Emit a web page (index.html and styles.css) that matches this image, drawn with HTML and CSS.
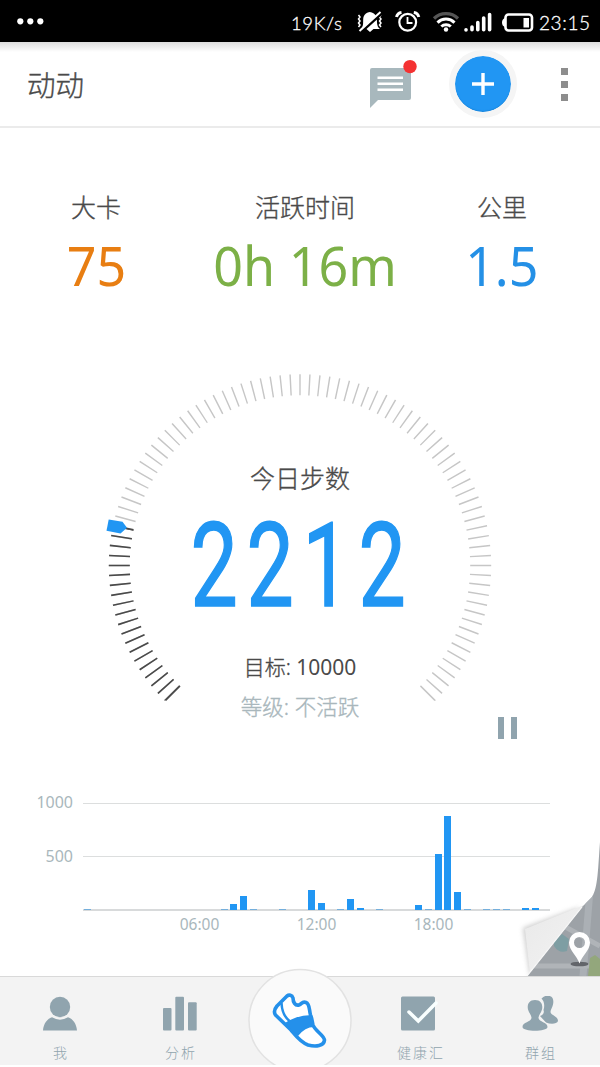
FILE: index.html
```html
<!DOCTYPE html>
<html lang="zh-CN">

<head>
    <meta charset="UTF-8">
    <meta name="viewport" content="width=device-width, initial-scale=1.0">
    <title>动动</title>
    <link rel="stylesheet" href="styles.css">
</head>

<body>
    <div class="status-bar">
        <svg class="more" width="30" height="42" viewBox="0 0 30 42">
            <g fill="#fff">
                <circle cx="3.3" cy="21.3" r="3.1" />
                <circle cx="13.3" cy="21.3" r="3.1" />
                <circle cx="23.3" cy="21.3" r="3.1" />
            </g>
        </svg>
        <span class="speed">19K/s</span>
        <!-- mute, alarm, wifi, signal, battery -->
        <svg class="status-icons" width="184" height="42" viewBox="352 0 184 42">
            <g fill="none" stroke="#fff" stroke-width="1.5">
                <path d="M358.500 15l1.500 2-1.500 2 1.500 2-1.500 2 1.500 2-1.500 2M381 15l-1.500 2 1.500 2-1.500 2 1.500 2-1.500 2 1.500 2" />
            </g>
            <path d="M360.500 29C364.500 26 362.500 21 363.500 17C364.500 14 367 12.500 369.800 12C372.500 12.500 375.500 14 376.500 17C377.500 21 376 26 380 29H373.500L370 32L366.500 29Z" fill="#fff" />
            <path d="M360.500 32.500L381.500 13.500" stroke="#000" stroke-width="3" />
            <path d="M359.500 31L380.500 12" stroke="#fff" stroke-width="2" />
            <g fill="none" stroke="#fff">
                <circle cx="407.700" cy="22.300" r="8.400" stroke-width="2.200" />
                <path d="M407.500 17v6h5" stroke-width="1.800" />
                <path d="M396.500 17q1-4 5-4.500M413.800 12.500q4 .5 5 4.500" stroke-width="3" />
                <path d="M434 18.500a17 17 0 0 1 24 0" stroke="#555" stroke-width="3.200" />
                <path d="M437.500 22.600a12 12 0 0 1 17 0" stroke-width="3" />
                <path d="M441.300 26.500a7 7 0 0 1 9.500 0" stroke-width="3" />
            </g>
            <circle cx="446" cy="29.500" r="2.200" fill="#fff" />
            <g stroke="#fff" stroke-width="3.600" stroke-linecap="round">
                <path d="M466 29.800v.1M472 27v2.800M477.800 22.500v7.300M483.700 18v11.800M489.600 14.500v15.300" />
            </g>
            <rect x="505.500" y="14.500" width="26.500" height="16" rx="3" fill="none" stroke="#fff" stroke-width="2.600" />
            <path d="M505 18q-3 1-3 4.500t3 4.500z" fill="#fff" />
            <rect x="523.500" y="18" width="5.500" height="9.500" fill="#fff" />
        </svg>
        <span class="clock">23:15</span>
    </div>

    <header class="header">
        <h1>动动</h1>
        <svg class="message" width="52" height="52" viewBox="368 58 52 52">
            <path d="M370 70q0-2 2-2h37q2 0 2 2v28q0 2-2 2h-31l-8 8z" fill="#a8b8bd" />
            <path d="M377.500 77.700h25.500M377.500 83.700h25.500M377.500 89.700h25.500" stroke="#fff" stroke-width="2.500" />
            <circle cx="410" cy="66.600" r="6.700" fill="#f43232" />
        </svg>
        <div class="add">
            <svg width="22" height="22" viewBox="0 0 22 22">
                <path d="M0 11h22M11 0v22" stroke="#fff" stroke-width="3.400" />
            </svg>
        </div>
        <div class="menu">
            <i></i>
            <i></i>
            <i></i>
        </div>
    </header>

    <main class="main">
        <section class="stats">
            <div class="stat calories">
                <h2>大卡</h2>
                <p><span>75</span></p>
            </div>
            <div class="stat active-time">
                <h2>活跃时间</h2>
                <p><span>0h 16m</span></p>
            </div>
            <div class="stat distance">
                <h2>公里</h2>
                <p><span>1.5</span></p>
            </div>
        </section>

        <section class="gauge">
            <!-- 3 degrees per tick, 270 degrees in total -->
            <svg class="dial" width="400" height="350" viewBox="100 366 400 350">
                <circle class="ticks" cx="300" cy="565.500" r="180.700" pathLength="120" stroke-dasharray=".15 .85" stroke-dashoffset=".075" />
                <path d="M300 565.500L165 700.500v20h270v-20z" fill="#fff" />
                <path class="ticks done" d="M172.227 693.273A180.700 180.700 0 0 1 123.250 527.930" pathLength="19" stroke-dasharray=".17 .83" stroke-dashoffset=".085" />
                <g class="end-ticks">
                    <path d="M165.500 700.500L180 686" stroke="#4a4a4a" />
                    <path d="M435 700.500L420.500 686" stroke="#c6c6c6" />
                    <path d="M133.500 529.700L124 527.800" stroke="#4a4a4a" />
                </g>
                <path d="M108.700 519.500L122.500 521.700L127 527.800L120.500 533.500L106.500 530.700Z" fill="#2196f3" />
            </svg>
            <div class="gauge-text">
                <h2>今日步数</h2>
                <p class="steps">2212</p>
                <p class="goal">目标: <span>10000</span></p>
                <p class="level">等级: 不活跃</p>
            </div>
        </section>

        <div class="pause">
            <i></i>
            <i></i>
        </div>

        <section class="chart">
            <div class="y-axis">
                <span>1000</span>
                <span>500</span>
            </div>
            <div class="plot">
                <div class="bars">
                    <i class="low" style="grid-column: 1"></i>
                    <i class="low" style="grid-column: 15"></i>
                    <i style="grid-column: 16; height: 6px"></i>
                    <i style="grid-column: 17; height: 14px"></i>
                    <i class="low" style="grid-column: 18"></i>
                    <i class="low" style="grid-column: 21"></i>
                    <i style="grid-column: 24; height: 20px"></i>
                    <i style="grid-column: 25; height: 7px"></i>
                    <i class="low" style="grid-column: 27"></i>
                    <i style="grid-column: 28; height: 11px"></i>
                    <i style="grid-column: 29; height: 2px"></i>
                    <i class="low" style="grid-column: 31"></i>
                    <i style="grid-column: 35; height: 5px"></i>
                    <i class="low" style="grid-column: 36"></i>
                    <i style="grid-column: 37; height: 56px"></i>
                    <i style="grid-column: 38; height: 94px"></i>
                    <i style="grid-column: 39; height: 18px"></i>
                    <i class="low" style="grid-column: 40"></i>
                    <i class="low" style="grid-column: 42"></i>
                    <i class="low" style="grid-column: 43"></i>
                    <i class="low" style="grid-column: 44"></i>
                    <i style="grid-column: 46; height: 2px"></i>
                    <i style="grid-column: 47; height: 2px"></i>
                </div>
                <div class="x-axis">
                    <span>06:00</span>
                    <span>12:00</span>
                    <span>18:00</span>
                </div>
            </div>
        </section>

        <!-- page corner folded over the map -->
        <svg class="map-corner" width="90" height="136" viewBox="510 840 90 136">
            <defs>
                <clipPath id="map">
                    <path d="M600 842C598 868 598 888 592 897L582 907L527 976H600Z" />
                </clipPath>
                <linearGradient id="fold" x1="0" y1="0" x2="1" y2="1">
                    <stop offset="0" stop-color="#e9e9e9" />
                    <stop offset="1" stop-color="#f3f3f3" />
                </linearGradient>
                <filter id="shadow" x="-20%" y="-20%" width="140%" height="140%">
                    <feGaussianBlur stdDeviation="2.500" />
                </filter>
            </defs>
            <path d="M580 907L523 928L530 976Z" fill="#999" opacity=".5" filter="url(#shadow)" />
            <path d="M584 905L525 929L530 974Z" fill="url(#fold)" />
            <g clip-path="url(#map)">
                <rect x="510" y="840" width="90" height="136" fill="#9da2a7" />
                <path d="M594 840L583 976" stroke="#abb0b5" stroke-width="7" />
                <path d="M560 924L600 946M525 966H600" stroke="#b0b4b8" stroke-width="5" />
                <path d="M554 942L562 934L569 939L567 951Q559 954 554 946Z" fill="#7e9ea3" />
                <path d="M588 976L590 958L595 955L600 959V976Z" fill="#93a77c" />
            </g>
            <path d="M582 907L527 976" fill="none" stroke="#fafafa" stroke-width="1.200" />
            <ellipse cx="579.500" cy="964" rx="9" ry="2.300" fill="#62656a" />
            <path fill-rule="evenodd" d="M579.500 963.500C577 956 569 950 569 942.500A10.500 10.500 0 0 1 590 942.500C590 950 582 956 579.500 963.500ZM579.500 948a5.500 5.500 0 1 0 0-11a5.500 5.500 0 0 0 0 11Z" fill="#fff" />
        </svg>
    </main>

    <nav class="tabs">
        <a class="tab">
            <svg width="36" height="36" viewBox="0 0 36 36">
                <circle cx="18" cy="11" r="10.200" />
                <path d="M1 34.500C1.500 28 5 23 10 21.300Q18 26 26 21.300C31 23 34.500 28 35 34.500Z" />
            </svg>
            <span>我</span>
        </a>
        <a class="tab">
            <svg width="36" height="36" viewBox="0 0 36 36">
                <rect x="1" y="12" width="8.500" height="22.500" rx="1" />
                <rect x="13.300" y=".700" width="8.700" height="33.800" rx="1" />
                <rect x="26" y="6.300" width="8.700" height="28.200" rx="1" />
            </svg>
            <span>分析</span>
        </a>
        <a class="tab home">
            <svg width="104" height="97" viewBox="248 968 104 97">
                <circle cx="300" cy="1020.500" r="51" fill="#fafafa" stroke="#e2e2e2" stroke-width="1.500" />
                <path d="M287 996C289 994.500 292 995 293 998C293 1002 295 1006 299 1005C302 1004 302 1001 306 1002.500C310 1004 309 1010 310.500 1015C312 1018 312 1021 313 1025C315 1031 324 1035 324.500 1040C324 1046 316 1047 308 1045C300 1042 296 1036 291 1030L275.500 1015C273.500 1012 274.500 1009 277 1006Z" fill="#fff" stroke="#2490ea" stroke-width="3.600" stroke-linejoin="round" />
                <path d="M281.500 1003Q282 1015 289.500 1021" fill="none" stroke="#2490ea" stroke-width="2.500" />
                <path d="M285 1023Q297 1015 312 1015L314 1027Q305 1027 298 1036Z" fill="#2490ea" />
            </svg>
        </a>
        <a class="tab">
            <svg width="40" height="36" viewBox="0 0 40 36">
                <rect x="1" y=".500" width="34" height="34" rx="1.500" />
                <path d="M9 16L18.300 25L36 7" fill="none" stroke="#f9ffff" stroke-width="3.500" stroke-linecap="round" />
            </svg>
            <span>健康汇</span>
        </a>
        <a class="tab">
            <svg width="36" height="36" viewBox="0 0 36 36">
                <path d="M25.500-.300C31-.300 32 4 31 8.500C30.500 11 28.500 14 28.500 16C29 19.500 36 20 36 25C35 28 29 28.500 24 26.500L18 20Q23 18 21.500 14C23 9 22 5 19.500 2.500Q22-.300 25.500-.300Z" />
                <path d="M13 4C19.500 4 21 9 20 13.500C19 17 16.500 19 16.500 22C17 26 25.500 26 25.500 31C25 36 1 36 .500 31C.500 26 9 26 9.500 22C9.500 19 7 17 6 13.500C5 9 6.500 4 13 4Z" stroke="#f3f3f3" stroke-width="1.800" paint-order="stroke" />
            </svg>
            <span>群组</span>
        </a>
    </nav>
</body>

</html>
```
FILE: styles.css
```css
* {
    box-sizing: border-box;
}

body {
    margin: 0;
    width: 600px;
    height: 1067px;
    overflow: hidden;
    display: flex;
    flex-direction: column;
    background-color: #fff;
    color: #4a4a4a;
    font-family: "Noto Sans", "Noto Sans CJK SC", sans-serif;
}

h1,
h2,
p {
    margin: 0;
    font-weight: 300;
}

h1,
h2,
.goal,
.level {
    -webkit-text-stroke: 0.35px;
}

svg {
    display: block;
    flex: none;
}

/* Status bar */
.status-bar {
    height: 42px;
    flex: none;
    display: flex;
    align-items: center;
    padding-left: 17px;
    background-color: #000;
    color: #fff;
    font-family: Lato, sans-serif;
    font-size: 19px;
    font-weight: 300;
    line-height: 42px;
}

.speed {
    width: 52px;
    margin-left: 244px;
    padding-top: 3px;
    font-size: 18.5px;
    letter-spacing: 0.6px;
    white-space: nowrap;
    -webkit-text-stroke: 0.3px;
}

.status-icons {
    margin-left: 9px;
}

.clock {
    margin-left: 3px;
    padding-top: 4px;
    letter-spacing: 0.6px;
    -webkit-text-stroke: 0.3px;
}

/* Header */
.header {
    height: 86px;
    flex: none;
    display: flex;
    align-items: center;
    padding-left: 27px;
    border-bottom: 2px solid #ebebeb;
    background: linear-gradient(#dedede, #fff 10px);
}

.header h1 {
    width: 341px;
    font-family: "Noto Sans CJK SC", sans-serif;
    font-size: 28.5px;
    line-height: 40px;
}

.add {
    width: 68px;
    height: 68px;
    margin-left: 29px;
    display: flex;
    align-items: center;
    justify-content: center;
    border: 6px solid #f5f5f5;
    border-radius: 50%;
    background-color: #2196f3;
    background-clip: padding-box;
    box-shadow: inset 0 -1px 1px #1c87dc;
}

.menu {
    margin-left: 44px;
    display: grid;
    gap: 6px;
}

.menu i {
    width: 7px;
    height: 7px;
    background-color: #8d8d8d;
}

/* Numbers on top */
.main {
    position: relative;
    height: 848px;
    flex: none;
}

.stats {
    display: grid;
    grid-template-columns: 192px 226px 168px;
    height: 157px;
    padding-top: 59px;
    text-align: center;
}

.stat h2,
.gauge h2 {
    font-family: "Noto Sans CJK SC", sans-serif;
    font-size: 25px;
    line-height: 38px;
}

.stat p {
    font-size: 55px;
    line-height: 79px;
    font-weight: 400;
    white-space: nowrap;
}

.stat span {
    display: inline-block;
    transform: scaleX(0.945);
}

.calories p {
    color: #e87e12;
}

.active-time p {
    color: #7cb047;
}

.distance p {
    color: #2490e6;
}

/* Step gauge */
.gauge {
    height: 350px;
    display: grid;
    justify-items: center;
    margin-top: 81px;
}

.dial,
.gauge-text {
    grid-area: 1 / 1;
}

.ticks {
    fill: none;
    stroke: #c6c6c6;
    stroke-width: 21px;
}

.ticks.done {
    stroke: #4a4a4a;
}

.end-ticks path {
    fill: none;
    stroke-width: 1.6px;
}

.gauge-text {
    padding-top: 92px;
    text-align: center;
}

.steps {
    height: 151px;
    color: #2196f3;
    font-family: Roboto, sans-serif;
    font-size: 116px;
    font-weight: 400;
    line-height: 141px;
    letter-spacing: 12px;
    text-indent: 7px;
    white-space: nowrap;
    transform: scaleX(0.725);
    -webkit-text-stroke: 1.5px;
}

.goal,
.level {
    font-size: 21px;
    line-height: 40px;
    white-space: nowrap;
}

.goal span {
    font-weight: 400;
    -webkit-text-stroke: 0;
}

.level {
    color: #a9b7bc;
    font-size: 21.5px;
}

.pause {
    display: flex;
    gap: 7px;
    margin: 1px 0 0 498px;
}

.pause i {
    width: 6px;
    height: 22px;
    background-color: #90a4ae;
}

/* Hourly chart */
.chart {
    display: flex;
    margin-top: 64px;
    color: #a9b7bc;
    font-size: 16px;
}

.y-axis {
    width: 73px;
    margin-top: -14px;
    display: flex;
    flex-direction: column;
    text-align: right;
    line-height: 27px;
    gap: 27px;
}

.plot {
    width: 467px;
    margin-left: 10px;
}

.bars {
    height: 108px;
    display: grid;
    grid-template-columns: repeat(48, 1fr);
    grid-template-rows: 107px;
    align-items: end;
    justify-items: center;
    border-bottom: 2px solid #d8dadb;
    background: linear-gradient(#dcdede, #dcdede) 0 0 / 100% 1px no-repeat,
        linear-gradient(#dcdede, #dcdede) 0 53px / 100% 1px no-repeat;
}

.bars i {
    grid-row: 1;
    width: 7px;
    background-color: #2196f3;
}

.bars i.low {
    height: 1px;
    background-color: #74afdc;
}

.x-axis {
    display: grid;
    grid-template-columns: repeat(3, 117px);
    padding-left: 58px;
    text-align: center;
    line-height: 26px;
    font-size: 15.5px;
}

.map-corner {
    position: absolute;
    right: 0;
    bottom: 0;
}

/* Bottom tabs */
.tabs {
    height: 89px;
    flex: none;
    display: grid;
    grid-template-columns: repeat(5, 1fr);
    border-top: 1px solid #d9d9d9;
    background-color: #f3f3f3;
}

.tab {
    display: flex;
    flex-direction: column;
    align-items: center;
    padding-top: 19px;
    color: #90a4ae;
    fill: #90a4ae;
    font-family: "Noto Sans CJK SC", sans-serif;
    font-size: 14px;
    font-weight: 300;
    line-height: 20px;
    letter-spacing: 2px;
}

.tab span {
    margin-top: 10px;
    padding-left: 2px;
}

.tab.home {
    margin-top: -9px;
    padding-top: 0;
}
```
